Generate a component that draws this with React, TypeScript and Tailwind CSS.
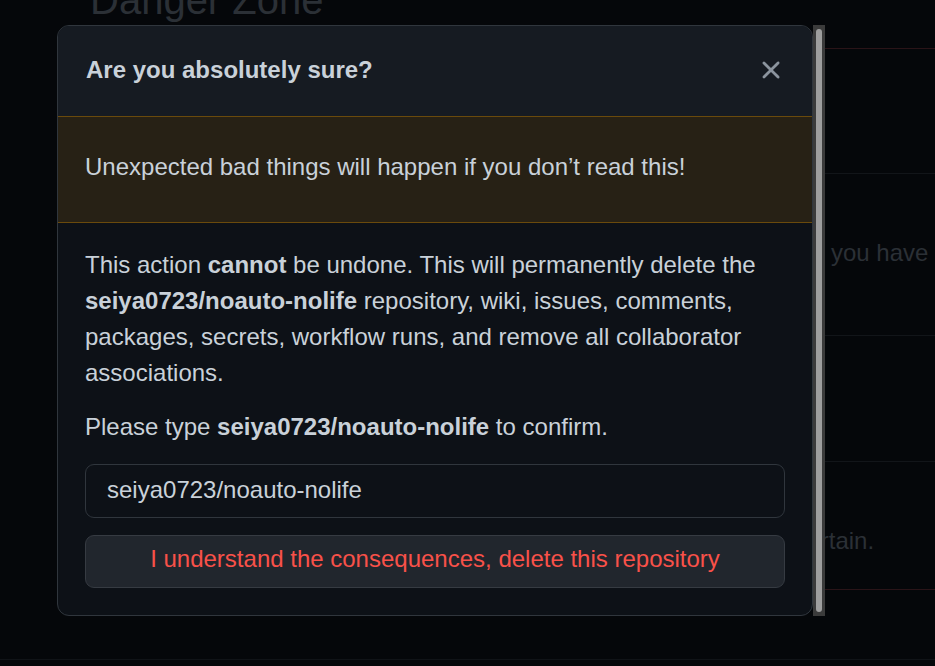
import React from 'react';

const CloseIcon: React.FC = () => (
  <svg viewBox="0 0 16 16" className="w-[30px] h-[30px]" fill="#8b949e" aria-hidden="true">
    <path d="M3.72 3.72a.75.75 0 0 1 1.06 0L8 6.94l3.22-3.22a.749.749 0 0 1 1.275.326.749.749 0 0 1-.215.734L9.06 8l3.22 3.22a.749.749 0 0 1-.326 1.275.749.749 0 0 1-.734-.215L8 9.06l-3.22 3.22a.751.751 0 0 1-1.042-.018.751.751 0 0 1-.018-1.042L6.94 8 3.72 4.78a.75.75 0 0 1 0-1.06Z" />
  </svg>
);

const RepoName = 'seiya0723/noauto-nolife';

export default function App() {
  return (
    <div className="relative h-[666px] w-[935px] overflow-hidden bg-[#05070a] font-['Liberation_Sans',Arial,sans-serif]">
      {/* Page behind the dialog */}
      <div className="ml-[90px] mt-[-20px] text-[40px] leading-[40px] text-[#2b3036]">Danger Zone</div>

      <div className="ml-[90px] mt-[28px] w-[1000px] border border-[#2a1418] rounded-[9px]">
        <div className="h-[124px]" />
        <div className="h-[162px] border-t border-[#121519] pl-[740px] pt-[61px] text-[24px] leading-[36px] text-[#2b3036] whitespace-nowrap">
          you have the ability to create repositories.
        </div>
        <div className="h-[126px] border-t border-[#121519]" />
        <div className="h-[128px] border-t border-[#121519] pl-[591px] pt-[61px] text-[24px] leading-[36px] text-[#2b3036] whitespace-nowrap">
          Please be certain.
        </div>
      </div>
      <div className="mt-[69px] border-t border-[#101317]" />

      {/* Dialog */}
      <div className="absolute left-[57px] top-[25px] flex">
        <div className="w-[756px] h-[591px] overflow-hidden rounded-[12px] border border-[#30363d] bg-[#0d1117]">
          <div className="flex h-[90px] items-center justify-between bg-[#161b22] pl-[28px] pr-[26px] pb-[2px]">
            <h1 className="text-[24px] font-bold leading-[36px] text-[#c9d1d9]">Are you absolutely sure?</h1>
            <button className="flex items-center justify-center" aria-label="Close dialog">
              <CloseIcon />
            </button>
          </div>

          <div className="border-y border-[#6a4a0c] bg-[#272115] px-[27px] pt-[32px] pb-[37px] text-[24px] leading-[36px] text-[#c9d1d9]">
            Unexpected bad things will happen if you don’t read this!
          </div>

          <div className="px-[27px] pt-[24px] pb-[27px] text-[24px] leading-[36px] text-[#c9d1d9]">
            <p className="mb-[18px]">
              This action <strong className="font-bold">cannot</strong> be undone. This will permanently delete the{' '}
              <strong className="font-bold">{RepoName}</strong> repository, wiki, issues, comments, packages, secrets,
              workflow runs, and remove all collaborator associations.
            </p>
            <p>
              Please type <strong className="font-bold">{RepoName}</strong> to confirm.
            </p>
            <input
              readOnly
              value={RepoName}
              className="mt-[19px] block h-[54px] w-full rounded-[9px] border border-[#30363d] bg-[#0d1117] pl-[21px] pb-[2px] text-[24px] text-[#c9d1d9] outline-none"
            />
            <button className="mt-[17px] block h-[53px] w-full rounded-[9px] border border-[#363b42] bg-[#21262d] pb-[6px] text-[24px] text-[#f85149]">
              I understand the consequences, delete this repository
            </button>
          </div>
        </div>

        {/* Scrollbar */}
        <div className="flex h-[591px] w-[12px] justify-center bg-[#3b3b3b] py-[4px]">
          <div className="w-[6px] rounded-full bg-[#9e9e9e]" />
        </div>
      </div>
    </div>
  );
}
